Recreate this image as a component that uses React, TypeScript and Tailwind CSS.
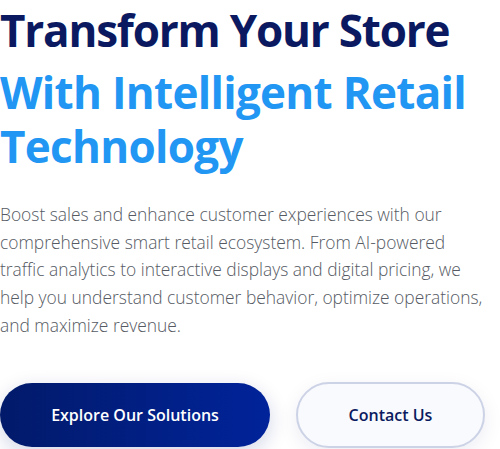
import React from "react";

export default function App() {
  return (
    <div className="w-[500px] h-[449px] overflow-hidden bg-white" style={{ fontFamily: '"Open Sans", "Noto Sans", sans-serif' }}>
      <h1 className="font-bold text-[44px] leading-[54px] tracking-[-1.2px] pt-[3px]">
        <span className="block text-[#0b1a60] mb-[8px]">Transform Your Store</span>
        <span className="block text-[#2196f3] tracking-[-0.7px]">With Intelligent Retail Technology</span>
      </h1>
      <p className="mt-[28px] w-[494px] text-[17.4px] leading-[27.7px] font-light text-[#555a63]">
        Boost sales and enhance customer experiences with our comprehensive smart retail ecosystem. From AI-powered traffic analytics to interactive displays and digital pricing, we help you understand customer behavior, optimize operations, and maximize revenue.
      </p>
      <div className="mt-[43px] flex gap-[26px]">
        <button className="w-[270px] h-[64px] rounded-full bg-gradient-to-r from-[#021a6a] to-[#00239a] text-white text-[16px] font-semibold tracking-[0px] shadow-[0_6px_20px_rgba(10,30,120,0.18)]">
          Explore Our Solutions
        </button>
        <button className="w-[189px] h-[66px] -mt-[1px] rounded-full bg-[#f9fafd] border-2 border-[#cdd3e6] text-[#0b1a60] text-[16px] font-semibold tracking-[0px] shadow-[0_6px_20px_rgba(10,30,120,0.08)]">
          Contact Us
        </button>
      </div>
    </div>
  );
}
